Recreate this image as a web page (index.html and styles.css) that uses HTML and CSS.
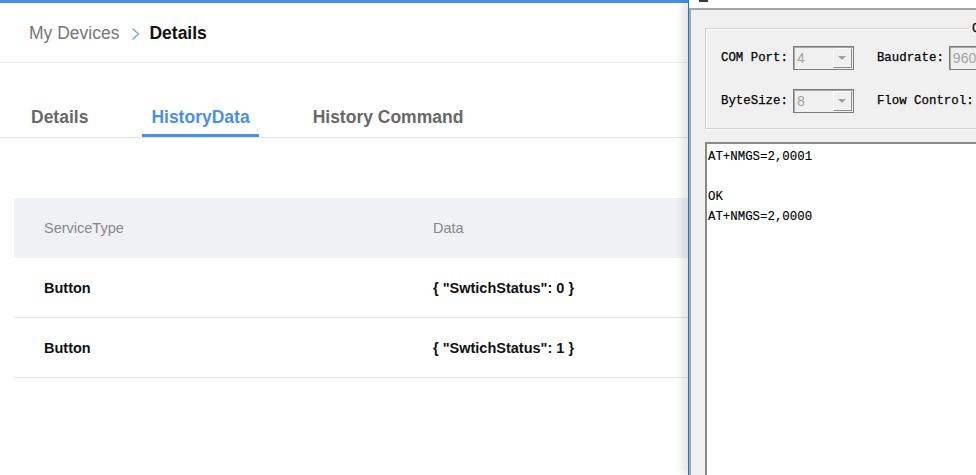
FILE: index.html
```html
<!DOCTYPE html>
<html>
<head>
<meta charset="utf-8">
<link rel="stylesheet" href="styles.css">
</head>
<body>
<div class="screen">
  <div class="portal">
    <div class="topbar"></div>
    <div class="crumb">
      <span class="crumb-link">My Devices</span>
      <svg class="chev" width="9" height="14" viewBox="0 0 9 14"><polyline points="1.5,1.5 7.5,7 1.5,12.5" fill="none" stroke="#6f9fd9" stroke-width="1.2"/></svg>
      <span class="crumb-cur">Details</span>
    </div>
    <div class="tabs">
      <div class="tab">Details</div>
      <div class="tab active">HistoryData</div>
      <div class="tab">History Command</div>
    </div>
    <div class="table">
      <div class="row head">
        <div class="cell">ServiceType</div>
        <div class="cell">Data</div>
      </div>
      <div class="row">
        <div class="cell">Button</div>
        <div class="cell">{ "SwtichStatus": 0 }</div>
      </div>
      <div class="row">
        <div class="cell">Button</div>
        <div class="cell">{ "SwtichStatus": 1 }</div>
      </div>
    </div>
  </div>
  <div class="win">
    <div class="titlestrip"><span class="tmark"></span></div>
    <div class="frame">
      <div class="group">
        <span class="legend">Com Settings</span>
        <div class="frow">
          <span class="lbl">COM Port:</span>
          <div class="combo"><span class="val">4</span><span class="btn"><span class="arrow"></span></span></div>
          <span class="lbl second">Baudrate:</span>
          <div class="combo"><span class="val">9600</span><span class="btn"><span class="arrow"></span></span></div>
        </div>
        <div class="frow">
          <span class="lbl">ByteSize:</span>
          <div class="combo"><span class="val">8</span><span class="btn"><span class="arrow"></span></span></div>
          <span class="lbl second">Flow Control:</span>
          <div class="combo"><span class="val">None</span><span class="btn"><span class="arrow"></span></span></div>
        </div>
      </div>
      <div class="output">
        <div class="line">AT+NMGS=2,0001</div>
        <div class="line"></div>
        <div class="line">OK</div>
        <div class="line">AT+NMGS=2,0000</div>
      </div>
    </div>
  </div>
</div>
</body>
</html>
```
FILE: styles.css
```css
* { box-sizing: border-box; }
html, body { margin: 0; padding: 0; background: #fff; }
body { width: 976px; height: 475px; overflow: hidden; font-family: "Liberation Sans", Arial, sans-serif; }

.screen { display: flex; width: 976px; height: 475px; overflow: hidden; }

.portal { flex: 0 0 688px; width: 688px; display: flex; flex-direction: column; background: #fff; }
.topbar { height: 3px; background: #4a90e2; }

.crumb { height: 60px; display: flex; align-items: center; padding: 2px 0 0 29px; border-bottom: 1px solid #ececec; font-size: 17.5px; }
.crumb-link { color: #767676; }
.chev { margin-left: 12px; margin-right: 9px; }
.crumb-cur { color: #111; font-weight: bold; }

.tabs { display: flex; gap: 45px; padding-left: 22px; margin-top: 43px; border-bottom: 1px solid #e4e4e4; }
.tab { padding: 1px 9px 7px; line-height: 20px; font-size: 17.5px; font-weight: bold; color: #686868; border-bottom: 3px solid transparent; }
.tab.active { color: #4a90e2; border-bottom-color: #4a90e2; }

.table { margin-top: 60px; margin-left: 14px; }
.row { display: grid; grid-template-columns: 389px 1fr; height: 60px; align-items: center; border-bottom: 1px solid #e3e3e3; font-size: 14.5px; font-weight: bold; color: #111; }
.row.head { background: #f0f1f4; border-bottom: none; font-weight: normal; color: #888; }
.cell { padding-left: 30px; }

.win { flex: 0 0 480px; width: 480px; display: flex; flex-direction: column; border-left: 1px solid #1c78d8; position: relative; z-index: 1; box-shadow: -6px 0 8px rgba(0,0,0,0.10); background: #f0f0f0; font-family: "Liberation Mono", "Courier New", monospace; }
.titlestrip { height: 8px; background: #fff; display: flex; }
.tmark { display: block; width: 9px; height: 2px; margin-left: 10px; background: #3a3a3a; }
.frame { flex: 1; border-top: 2px solid #a6a6a6; border-left: 2px solid #a6a6a6; background: #f0f0f0; padding: 18px 0 0 14px; display: flex; flex-direction: column; }

.group { position: relative; border: 1px solid #d2d2d2; box-shadow: inset 1px 1px 0 #fff, 1px 1px 0 #fff; height: 101px; padding: 17px 0 0 15px; display: flex; flex-direction: column; gap: 19px; }
.legend { position: absolute; top: -7px; left: 263px; padding: 0 3px; background: #f0f0f0; font-size: 12.4px; line-height: 14px; color: #000; -webkit-text-stroke: 0.25px #000; }
.frow { display: flex; align-items: center; gap: 5px; }
.lbl { font-size: 12.4px; color: #000; white-space: nowrap; -webkit-text-stroke: 0.25px #000; }
.lbl.second { margin-left: 18px; }

.combo { flex: 0 0 61px; width: 61px; height: 24px; display: flex; align-items: stretch; border: 1px solid #7d7d7d; box-shadow: inset 1px 1px 0 #a8a8a8; background: #f0f0f0; padding: 1px 1px 1px 2px; }
.val { flex: 1; font-family: "Liberation Sans", Arial, sans-serif; font-size: 14px; color: #a3a3a3; line-height: 20px; padding-left: 1px; }
.btn { width: 19px; display: flex; align-items: center; justify-content: center; border-top: 1px solid #fbfbfb; border-left: 1px solid #fbfbfb; border-right: 1px solid #8c8c8c; border-bottom: 1px solid #8c8c8c; background: #f0f0f0; }
.arrow { width: 0; height: 0; border-left: 4px solid transparent; border-right: 4px solid transparent; border-top: 4px solid #a0a0a0; }

.output { flex: 1; margin-top: 13px; background: #fff; border-top: 2px solid #8a8a8a; border-left: 2px solid #8a8a8a; padding: 3px 0 0 1px; }
.line { height: 20px; line-height: 20px; font-size: 12.4px; color: #000; white-space: pre; -webkit-text-stroke: 0.15px #000; }
```
